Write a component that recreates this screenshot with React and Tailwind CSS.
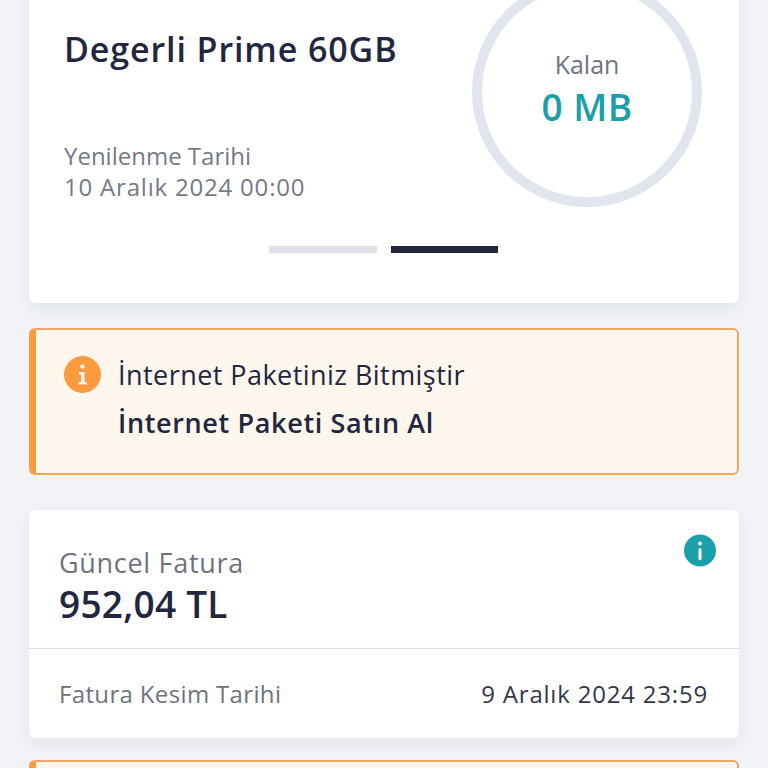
export default function App() {
  return (
    <div className="h-[768px] w-[768px] overflow-hidden bg-[#f1f3f7] font-['Open_Sans','Liberation_Sans',sans-serif] text-[#22263f]">
      <div className="mx-[29px] mt-[-40px] h-[343px] rounded-md bg-white px-9 pt-[17px] shadow-[0_6px_16px_rgba(30,40,70,0.07)]">
        <div className="flex justify-between">
          <div className="-ml-px flex h-[230px] flex-col">
            <h1 className="mt-[49px] text-[34px] leading-[46px] font-semibold tracking-[0.9px]">Degerli Prime 60GB</h1>
            <p className="mt-[68px] text-[24px] leading-[31px] text-[#767a85]">Yenilenme Tarihi</p>
            <p className="text-[24px] leading-[31px] tracking-[0.8px] text-[#767a85]">10 Aralık 2024 00:00</p>
          </div>
          <div className="mr-px flex h-[230px] w-[230px] flex-col items-center justify-center rounded-full border-[10px] border-[#e0e5ee] pb-[5px]">
            <span className="text-[25px] leading-[32px] text-[#707480]">Kalan</span>
            <span className="mt-[3px] text-[37px] leading-[48px] font-semibold tracking-[0.5px] text-[#1ba0ab]">0 MB</span>
          </div>
        </div>
        <div className="mt-[39px] flex justify-center gap-[14px] pr-[2px]">
          <div className="h-[7px] w-[108px] bg-[#e0e2ea]"></div>
          <div className="h-[7px] w-[107px] bg-[#22263f]"></div>
        </div>
      </div>

      <div className="mx-[29px] mt-[25px] h-[147px] rounded-md border-2 border-l-[7px] border-[#f0a860] border-l-[#fb9a3e] bg-[#fdf6ed] pt-[26px] pl-[28px]">
        <div className="flex gap-[17px]">
          <svg width="37" height="37" viewBox="0 0 37 37" className="shrink-0">
            <circle cx="18.5" cy="18.5" r="18.5" fill="#fb9a3e" />
            <circle cx="18.5" cy="10.5" r="2.3" fill="#fdf6ed" />
            <path d="M15 16h5.5v10h2.5v2.5h-8.500v-2.500h2.500v-7.500h-2z" fill="#fdf6ed" />
          </svg>
          <div>
            <p className="text-[27px] leading-[38px] tracking-[0.45px]">İnternet Paketiniz Bitmiştir</p>
            <p className="mt-[10px] text-[27px] leading-[38px] font-semibold tracking-[0.65px]">İnternet Paketi Satın Al</p>
          </div>
        </div>
      </div>

      <div className="relative mx-[29px] mt-[35px] h-[228px] rounded-md bg-white shadow-[0_6px_16px_rgba(30,40,70,0.07)]">
        <svg width="32" height="33" viewBox="0 0 32 33" className="absolute top-6 right-[23px]">
          <circle cx="16" cy="16.500" r="16" fill="#1ba0ab" />
          <circle cx="16" cy="9.500" r="2" fill="#fff" />
          <rect x="14.500" y="14" width="3" height="12" rx="1.500" fill="#fff" />
        </svg>
        <div className="h-[139px] border-b border-[#d9dee6] pt-[35px] pl-[30px]">
          <p className="text-[27px] leading-[36px] tracking-[0.7px] text-[#6f737e]">Güncel Fatura</p>
          <p className="mt-[1px] text-[37px] leading-[44px] font-semibold tracking-[0.25px]">952,04 TL</p>
        </div>
        <div className="flex h-[89px] items-center justify-between pr-[31px] pl-[30px] text-[24px]">
          <span className="tracking-[0.35px] text-[#6f737e]">Fatura Kesim Tarihi</span>
          <span className="tracking-[0.8px] text-[#33374a]">9 Aralık 2024 23:59</span>
        </div>
      </div>

      <div className="mx-[29px] mt-[22px] h-[60px] rounded-md border-2 border-l-[7px] border-[#f0a860] border-l-[#fb9a3e] bg-[#fdf6ed]"></div>
    </div>
  );
}
